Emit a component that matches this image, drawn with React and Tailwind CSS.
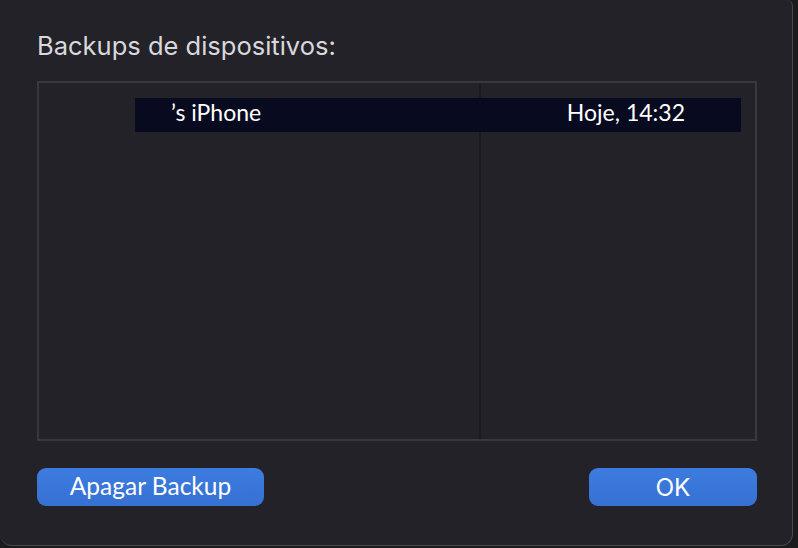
import React from "react";

function App() {
  return (
    <main className="w-[798px] h-[548px] bg-[#1b1b1d] overflow-hidden">
      <div
        className="w-[793px] h-[546px] bg-[#232228] border-r border-b border-[#4a494e] rounded-b-[12px] rounded-tr-[6px] pl-[37px] pr-[35px] pt-[31px] flex flex-col"
        style={{ fontFamily: "Lato, 'Noto Sans', sans-serif" }}
      >
        <h1
          className="text-[25.5px] leading-[30px] text-[#d9d8dd] h-[50px]"
          style={{ fontFamily: "Inter, 'Noto Sans', sans-serif" }}
        >
          Backups de dispositivos:
        </h1>
        <div className="relative w-[720px] h-[360px] border-2 border-[#39383d] bg-[#232228]">
          <div className="absolute top-0 bottom-0 left-[440px] w-[2px] bg-[#1b1b1f]" />
          <div className="pt-[15px] pl-[96px] pr-[14px]">
            <div className="relative h-[34px] bg-[#070b20]/95 flex items-center justify-between pl-[36px] pr-[56px] pb-[5px] text-[23px] text-white">
              <span>’s iPhone</span>
              <span>Hoje, 14:32</span>
            </div>
          </div>
        </div>
        <div className="mt-[27px] flex justify-between w-[720px]">
          <button className="w-[227px] h-[38px] rounded-[9px] bg-gradient-to-b from-[#3d7ce0] to-[#3670d2] text-white text-[24.5px] leading-none pb-[2px]">
            Apagar Backup
          </button>
          <button
            className="w-[168px] h-[38px] rounded-[9px] bg-gradient-to-b from-[#3d7ce0] to-[#3670d2] text-white text-[24.5px] leading-none"
            style={{ fontFamily: "Inter, 'Noto Sans', sans-serif" }}
          >
            OK
          </button>
        </div>
      </div>
    </main>
  );
}

export default App;
